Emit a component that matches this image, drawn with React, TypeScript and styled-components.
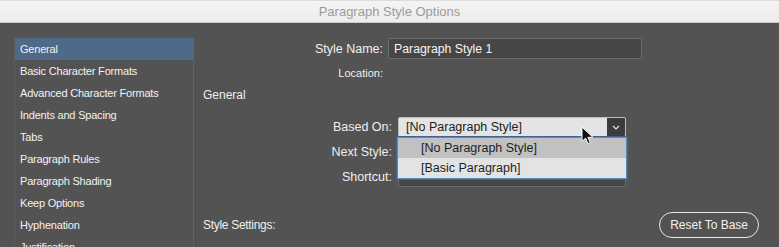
import React from 'react';
import styled, { createGlobalStyle } from 'styled-components';

const GlobalStyle = createGlobalStyle`
  html, body {
    margin: 0;
    padding: 0;
    background: #535353;
  }
  body {
    font-family: "Liberation Sans", Arial, sans-serif;
  }
`;

const Window = styled.div`
  width: 779px;
  height: 247px;
  overflow: hidden;
  display: flex;
  flex-direction: column;
  background: #535353;
  color: #ececec;
`;

const TitleBar = styled.div`
  flex: none;
  display: flex;
  align-items: center;
  justify-content: center;
  background: linear-gradient(#f4f4f4, #ececec);
  border-top: 1px solid #dcdcdc;
  border-bottom: 1px solid #c9c9c9;
  box-sizing: border-box;
  height: 23px;
  font-size: 13px;
  color: #9c9c9c;
`;

const Body = styled.div`
  flex: 1;
  display: flex;
  padding-top: 15px;
  min-height: 0;
`;

const Sidebar = styled.ul`
  list-style: none;
  margin: 0 0 0 14px;
  padding: 0;
  width: 178px;
  flex: none;
  border-left: 1px solid #5d5d5d;
  border-right: 1px solid #626262;
`;

const NavItem = styled.li<{ $active?: boolean }>`
  height: 22px;
  display: flex;
  align-items: center;
  padding-left: 5px;
  font-size: 11px;
  letter-spacing: -0.2px;
  color: #f2f2f2;
  background: ${(p) => (p.$active ? '#4f6a86' : 'transparent')};
`;

const Panel = styled.div`
  flex: 1;
  padding: 0 20px 0 9px;
  display: flex;
  flex-direction: column;
`;

const FormGrid = styled.div<{ $label: number; $gap: number; $field: number; $row: number }>`
  display: grid;
  grid-template-columns: ${(p) => `${p.$label}px ${p.$field}px`};
  column-gap: ${(p) => p.$gap}px;
  row-gap: ${(p) => p.$row}px;
  align-items: center;
`;

const Label = styled.div<{ $small?: boolean }>`
  text-align: right;
  font-size: ${(p) => (p.$small ? '11px' : '12.5px')};
  color: #efefef;
  white-space: nowrap;
`;

const TextInput = styled.div`
  height: 21px;
  box-sizing: border-box;
  border: 1px solid #6c6c6c;
  border-radius: 2px;
  background: #464646;
  display: flex;
  align-items: center;
  padding-left: 5px;
  font-size: 12.3px;
  color: #f4f4f4;
`;

const Spacer = styled.div`
  height: 20px;
`;

const SectionTitle = styled.div`
  font-size: 12px;
  color: #efefef;
  margin: 5px 0 15px 0;
`;

const SelectWrap = styled.div`
  position: relative;
  height: 20px;
`;

const Select = styled.div<{ $dark?: boolean }>`
  height: 20px;
  box-sizing: border-box;
  display: flex;
  align-items: stretch;
  border-radius: 2px;
  overflow: hidden;
  background: ${(p) => (p.$dark ? '#464646' : '#e4e4e4')};
  border: 1px solid ${(p) => (p.$dark ? '#6c6c6c' : '#bdbdbd')};
`;

const SelectText = styled.div`
  flex: 1;
  display: flex;
  align-items: center;
  padding-left: 7px;
  font-size: 12.5px;
  color: #1e1e1e;
`;

const SelectButton = styled.div`
  width: 18px;
  background: #3b3b3b;
  display: flex;
  align-items: center;
  justify-content: center;
`;

const Popup = styled.ul`
  position: absolute;
  top: 20px;
  left: -1px;
  right: -1px;
  margin: 0;
  padding: 0;
  list-style: none;
  border: 1px solid #5a89bf;
  box-shadow: 0 0 0 1px #3f6594;
  background: #e3e3e3;
  z-index: 2;
`;

const PopupItem = styled.li<{ $hover?: boolean }>`
  height: 20px;
  display: flex;
  align-items: center;
  padding-left: 23px;
  font-size: 12.5px;
  color: #1e1e1e;
  background: ${(p) => (p.$hover ? '#c1c1c1' : '#e3e3e3')};
`;

const Cursor = styled.svg`
  position: absolute;
  left: 183px;
  top: 9px;
  z-index: 3;
`;

const Footer = styled.div`
  display: flex;
  align-items: center;
  justify-content: space-between;
  margin-top: 25px;
`;

const FooterLabel = styled.div`
  font-size: 12px;
  letter-spacing: -0.3px;
  color: #efefef;
`;

const PillButton = styled.button`
  height: 26px;
  padding: 0 10px;
  border: 1px solid #e6e6e6;
  border-radius: 13px;
  background: transparent;
  color: #f2f2f2;
  font-family: "Liberation Sans", Arial, sans-serif;
  font-size: 12px;
`;

const navItems = [
  'General',
  'Basic Character Formats',
  'Advanced Character Formats',
  'Indents and Spacing',
  'Tabs',
  'Paragraph Rules',
  'Paragraph Shading',
  'Keep Options',
  'Hyphenation',
  'Justification',
];

export default function App() {
  return (
    <Window>
      <GlobalStyle />
      <TitleBar>Paragraph Style Options</TitleBar>
      <Body>
        <Sidebar>
          {navItems.map((item, i) => (
            <NavItem key={item} $active={i === 0}>
              {item}
            </NavItem>
          ))}
        </Sidebar>
        <Panel>
          <FormGrid $label={180} $gap={5} $field={254} $row={4}>
            <Label>Style Name:</Label>
            <TextInput>Paragraph Style 1</TextInput>
            <Label $small>Location:</Label>
            <Spacer />
          </FormGrid>
          <SectionTitle>General</SectionTitle>
          <FormGrid $label={189} $gap={6} $field={228} $row={5}>
            <Label>Based On:</Label>
            <SelectWrap>
              <Select>
                <SelectText>[No Paragraph Style]</SelectText>
                <SelectButton>
                  <svg width="8" height="5" viewBox="0 0 8 5">
                    <path d="M1 1l3 3 3-3" fill="none" stroke="#e0e0e0" strokeWidth="1.2" />
                  </svg>
                </SelectButton>
              </Select>
              <Popup>
                <PopupItem $hover>[No Paragraph Style]</PopupItem>
                <PopupItem>[Basic Paragraph]</PopupItem>
              </Popup>
              <Cursor width="13" height="19" viewBox="0 0 13 19">
                <path
                  d="M1 1v14.5l3.6-3.4 2.4 5.6 2.3-1-2.4-5.4h5z"
                  fill="#111"
                  stroke="#fff"
                  strokeWidth="1"
                  strokeLinejoin="round"
                />
              </Cursor>
            </SelectWrap>
            <Label>Next Style:</Label>
            <Select $dark />
            <Label>Shortcut:</Label>
            <Select $dark />
          </FormGrid>
          <Footer>
            <FooterLabel>Style Settings:</FooterLabel>
            <PillButton>Reset To Base</PillButton>
          </Footer>
        </Panel>
      </Body>
    </Window>
  );
}
